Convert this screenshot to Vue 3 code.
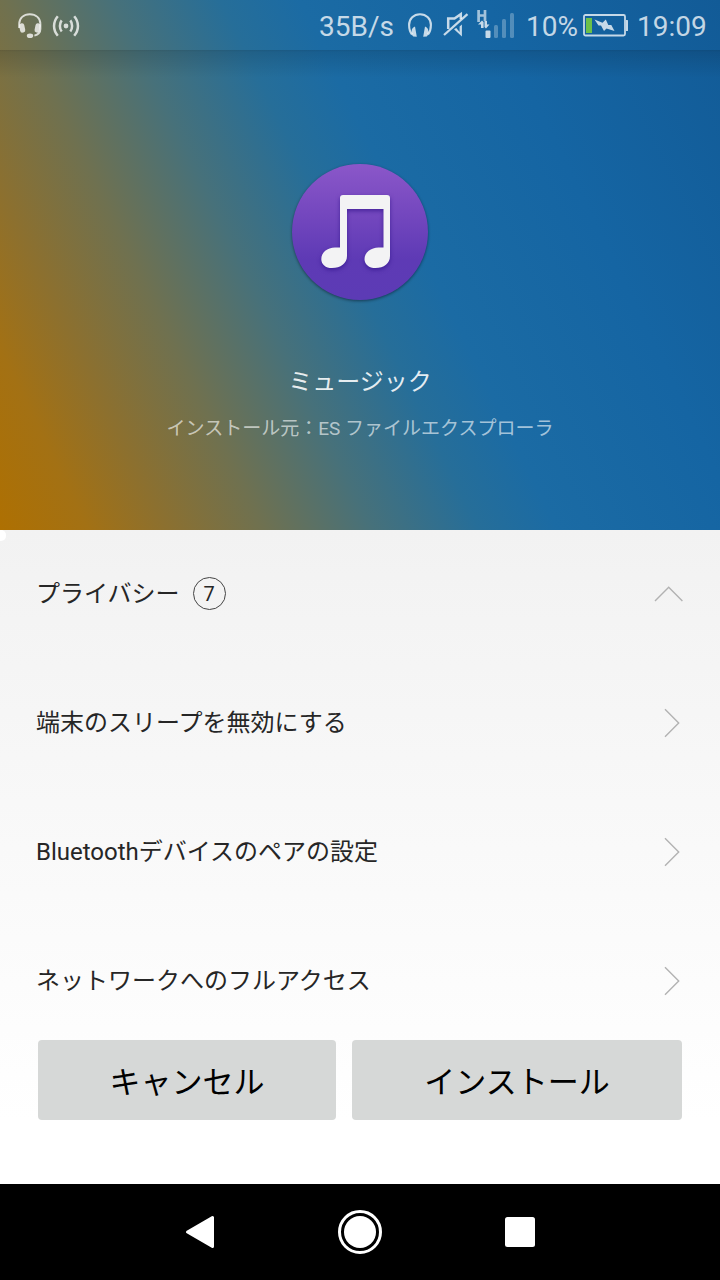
<template>
  <div class="screen">
    <header class="hero">
      <div class="status-bar">
        <svg class="icon-headset" width="24" height="26" viewBox="0 0 24 26">
          <path d="M1.200 15V11C1.200 5 5.700 1.200 11.800 1.200S22.400 5 22.400 11v5c0 3.500-2 5.600-6 6.600" fill="none" stroke="currentColor" stroke-width="1.900" />
          <rect x="1.600" y="10.300" width="5.200" height="9.400" rx="2.300" fill="currentColor" transform="rotate(-12 4 15)" />
          <rect x="17" y="10.300" width="5.200" height="9.400" rx="2.300" fill="currentColor" transform="rotate(12 20 15)" />
          <ellipse cx="12" cy="22.700" rx="3.200" ry="2.300" fill="currentColor" />
        </svg>
        <svg class="icon-cast" width="28" height="22" viewBox="0 0 28 22">
          <circle cx="14" cy="11" r="2.400" fill="currentColor" />
          <g fill="none" stroke="currentColor" stroke-width="2.500">
            <path d="M9.700 5.400C7.300 8.400 7.300 13.400 9.700 16.500M18.300 5.400c2.400 3 2.400 8 0 11.100" />
            <path d="M5.800 1.300c-5 5.800-5 13.600 0 19.400M22.200 1.300c5 5.800 5 13.600 0 19.400" />
          </g>
        </svg>

        <span class="speed">35B/s</span>
        <svg class="icon-headphones" width="24" height="24" viewBox="0 0 24 24">
          <path d="M4 21.500C2 19 1.100 15.500 1.100 12 1.100 5.700 5.700 1.200 12 1.200S22.900 5.700 22.900 12c0 3.500-.9 7-2.900 9.500" fill="none" stroke="currentColor" stroke-width="2.100" />
          <path d="M7 13.500c-2 .5-3.300 2.500-3.400 4.700-.1 2.400.5 4.300 1.700 5.300l3.500.200zM17 13.500c2 .5 3.300 2.500 3.400 4.700.1 2.400-.5 4.300-1.700 5.300l-3.500.200z" fill="currentColor" />
        </svg>
        <svg class="icon-mute" width="26" height="27" viewBox="0 0 26 27">
          <path d="M17.800 8V3.200L11.500 7.500H5.200V18" fill="none" stroke="currentColor" stroke-width="2.500" />
          <path d="M11 18.300l7.900 7.200V13.500l-2.300 2v5.600l-3.300-4z" fill="currentColor" />
          <path d="M1 24L24.500 3.200" fill="none" stroke="currentColor" stroke-width="2.300" />
        </svg>
        <svg class="icon-signal" width="39" height="30" viewBox="0 0 39 30">
          <path d="M2.600 1v12M9 1v11M2.600 6.500H9" fill="none" stroke="currentColor" stroke-width="2.700" opacity=".8" />
          <path d="M2 15.500L6 11.500 7.600 13v6H5v-3.500zM8.500 12H11v3.500h2.500L10 19.500l-1.500-1.500z" fill="currentColor" />
          <rect x="9.500" y="21.500" width="5" height="7.500" rx="1" fill="currentColor" />
          <g fill="currentColor" opacity=".35">
            <rect x="18" y="16" width="4" height="13" rx="1.500" />
            <rect x="26" y="10" width="4" height="19" rx="1.500" />
            <rect x="34" y="4" width="4" height="25" rx="1.500" />
          </g>
        </svg>
        <span class="percent">10%</span>
        <svg class="icon-battery" width="46" height="23" viewBox="0 0 46 23">
          <rect x="1" y="1" width="41" height="20.500" rx="1.500" fill="none" stroke="currentColor" stroke-width="1.800" />
          <path d="M43 6h1.500q.5 0 .5.500v10q0 .5-.5.500H43z" fill="currentColor" />
          <rect x="3" y="4" width="6" height="15" fill="#6cc04a" />
          <path d="M11.500 5.500l8 3.200 3.300-3.200 2.500 5.500h3L31.500 17l-8-2.500-2.500 2.500-3-5.500h-2.500z" fill="currentColor" />
        </svg>
        <time class="clock">19:09</time>
      </div>

      <svg class="app-icon" width="144" height="144" viewBox="0 0 144 144">
        <defs>
          <linearGradient id="disc" x1="0" y1="0" x2="0" y2="1">
            <stop offset="0" stop-color="#8b57c9" />
            <stop offset=".35" stop-color="#7548bf" />
            <stop offset=".7" stop-color="#5e3ab5" />
            <stop offset="1" stop-color="#5c3bb5" />
          </linearGradient>
        </defs>
        <circle class="disc" cx="72" cy="72" r="68" fill="url(#disc)" />
        <path class="note" fill="#f3f3f4" d="M55 35h44q3 0 3 3v58c0 7.500-6 12-14.500 12-6.500 0-11-3.600-11-8.800 0-6.700 6.500-11.700 14-11.700H95.500V49H59v47c0 7.500-6.500 12-15 12-6.500 0-10.700-3.600-10.700-8.800 0-6.700 6-11.700 13.700-11.700h5V38q0-3 3-3z" />
      </svg>
      <h1>ミュージック</h1>
      <p class="source">インストール元：ES ファイルエクスプローラ</p>
    </header>

    <main class="panel">
      <i class="nub"></i>
      <div class="list">
        <div class="row">
          <span>プライバシー</span>
          <span class="count">7</span>
          <svg class="chevron-up" width="30" height="16" viewBox="0 0 30 16">
            <path d="M1 15L14.700 1.300 28.400 15" />
          </svg>
        </div>
        <div v-for="item in permissions" :key="item" class="row">
          <span>{{ item }}</span>
          <svg class="chevron" width="16" height="30" viewBox="0 0 16 30">
            <path d="M1 1.300L14.700 15 1 28.700" />
          </svg>
        </div>
      </div>
      <div class="actions">
        <button class="cancel">キャンセル</button>
        <button class="install">インストール</button>
      </div>
    </main>

    <nav class="nav-bar">
      <svg width="30" height="34" viewBox="0 0 30 34">
        <path d="M2.500 17L27.500 2.500v29z" fill="#fff" stroke="#fff" stroke-width="3" stroke-linejoin="round" />
      </svg>
      <svg width="44" height="44" viewBox="0 0 44 44">
        <circle cx="22" cy="22" r="20.500" fill="none" stroke="#fff" stroke-width="3" />
        <circle cx="22" cy="22" r="16" fill="#fff" />
      </svg>
      <svg width="30" height="30" viewBox="0 0 30 30">
        <rect width="30" height="30" rx="2.500" fill="#fff" />
      </svg>
    </nav>
  </div>
</template>

<script setup>
const permissions = [
  '端末のスリープを無効にする',
  'Bluetoothデバイスのペアの設定',
  'ネットワークへのフルアクセス'
];
</script>

<style>
body {
  margin: 0;
}
</style>

<style scoped>
.screen {
  width: 720px;
  height: 1280px;
  display: flex;
  flex-direction: column;
  overflow: hidden;
  font-family: Roboto, "Noto Sans CJK JP", sans-serif;
}
.screen svg {
  display: block;
  flex: none;
}
.hero {
  height: 530px;
  display: flex;
  flex-direction: column;
  align-items: center;
  background:
    linear-gradient(transparent 50px, rgba(0, 0, 0, 0.18) 50px, rgba(0, 0, 0, 0.12) 52px, transparent 78px),
    linear-gradient(64deg, #ae7002 0%, #a37114 9%, #8c702f 17%, #6f7150 27%, #47717a 38%, #266e99 49%, #1b6ba4 57%, #1565a3 76%, #125b97 100%);
}
.status-bar {
  align-self: stretch;
  box-sizing: border-box;
  height: 52px;
  padding: 0 12px 1px 18px;
  display: flex;
  align-items: center;
  font-size: 28px;
  line-height: 50px;
  color: rgba(255, 255, 255, 0.76);
  white-space: nowrap;
}
.status-bar span,
.clock {
  padding-top: 2px;
}
.icon-cast {
  margin-left: 10px;
}
.speed {
  width: 75px;
  margin-left: 239px;
}
.icon-headphones {
  margin: -2px 0 0 14px;
}
.icon-mute {
  margin: -2px 0 0 11px;
}
.icon-signal {
  margin: -4px 0 0 7px;
}
.percent {
  width: 54px;
  margin-left: 11px;
}
.icon-battery {
  margin-left: 3px;
}
.clock {
  margin-left: 8px;
}
.app-icon {
  margin-top: 108px;
}
.disc {
  filter: drop-shadow(0 1px 1.5px rgba(0, 0, 0, 0.45));
}
.note {
  filter: drop-shadow(0 2px 2px rgba(50, 20, 140, 0.7));
}
h1 {
  margin: 60px 0 0;
  font-size: 24px;
  font-weight: 400;
  line-height: 36px;
  color: rgba(255, 255, 255, 0.88);
}
.source {
  margin: 15px 0 0;
  font-size: 19px;
  line-height: 28px;
  color: rgba(255, 255, 255, 0.62);
}
.panel {
  position: relative;
  height: 654px;
  background: linear-gradient(#f2f2f2, #ffffff 590px);
}
.nub {
  position: absolute;
  left: 0;
  top: 0;
  width: 6px;
  height: 11px;
  border-radius: 0 5px 5px 0;
  background: #fff;
}
.list {
  height: 510px;
  overflow: hidden;
}
.row {
  height: 129px;
  padding: 0 36px;
  display: flex;
  align-items: center;
  font-size: 24px;
  line-height: 36px;
  color: #262626;
}
.row:first-child {
  height: 127px;
  padding-bottom: 1px;
}
.count {
  box-sizing: border-box;
  width: 33px;
  height: 33px;
  margin-left: 13px;
  border: 1.5px solid #444;
  border-radius: 50%;
  font-size: 20px;
  line-height: 32px;
  text-align: center;
}
.row path {
  fill: none;
  stroke: #b2b2b2;
  stroke-width: 1.4;
}
.chevron-up {
  margin-left: auto;
}
.chevron {
  margin: 0 4px 0 auto;
}
.actions {
  display: flex;
  gap: 16px;
  padding: 0 38px;
}
button {
  height: 80px;
  padding: 0 0 2px;
  border: 0;
  border-radius: 4px;
  background: #d6d8d7;
  font: 400 31px "Noto Sans CJK JP", sans-serif;
  color: #000;
}
.cancel {
  width: 298px;
}
.install {
  width: 330px;
}
.nav-bar {
  height: 96px;
  padding: 0 185px;
  display: flex;
  align-items: center;
  justify-content: space-between;
  background: #000;
}
</style>
